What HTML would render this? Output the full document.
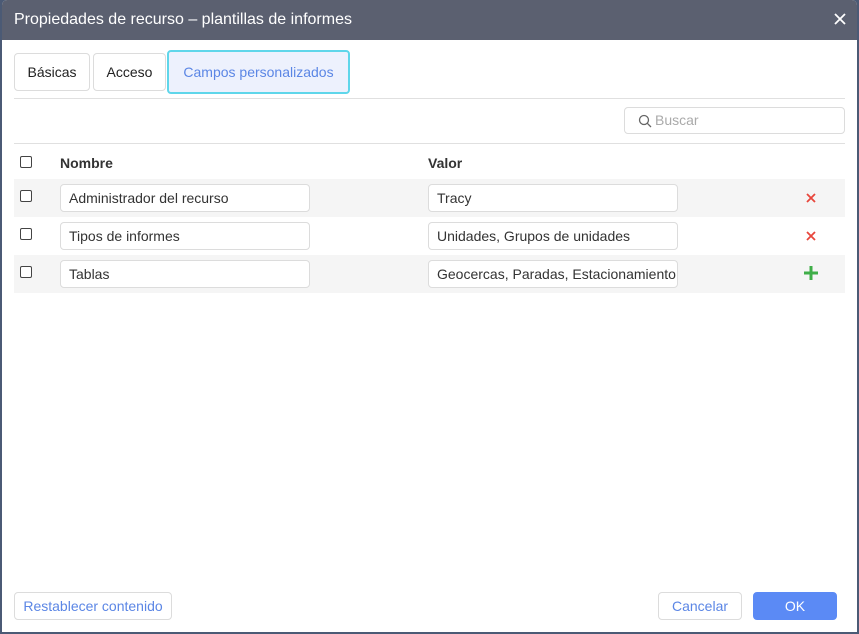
<!DOCTYPE html>
<html><head><style>
*{box-sizing:border-box;margin:0;padding:0}
body{width:859px;height:634px;background:#4b5a75;font-family:"Liberation Sans",Arial,sans-serif;overflow:hidden;position:relative}
.dlg{position:absolute;left:2px;top:0;width:855px;height:632px;background:#fff;border-radius:5px 5px 0 0;overflow:hidden}
.title{height:40px;background:#5b6070;color:#fff;font-size:16px;line-height:40px;padding-left:12px}
.close{position:absolute;right:10px;top:12px}
.tab{position:absolute;top:53px;height:38px;border:1px solid #dcdcdc;border-radius:4px;font-size:14px;line-height:36px;text-align:center;color:#222}
.abs{position:absolute}
.line{position:absolute;left:12px;width:831px;height:1px;background:#e0e0e0}
.row{position:absolute;left:12px;width:831px;height:38px}
.cb{position:absolute;left:6px;width:12px;height:12px;border:1px solid #444;border-radius:2px;background:#fff}
.inp{position:absolute;height:28px;border:1px solid #dcdcdc;border-radius:4px;background:#fff;font-size:14px;line-height:26px;padding-left:8px;color:#333;overflow:hidden;white-space:nowrap;width:250px}
.btn{position:absolute;top:592px;height:28px;border:1px solid #dcdcdc;border-radius:4px;font-size:14px;line-height:26px;text-align:center;color:#5b86e5;background:#fff}
</style></head><body>
<div class="dlg">
<div class="title">Propiedades de recurso – plantillas de informes</div>
<svg class="close" width="14" height="14" viewBox="0 0 14 14"><path d="M2 2L12 12M12 2L2 12" stroke="#fff" stroke-width="1.8"/></svg>
<div class="tab" style="left:12px;width:76px">Básicas</div>
<div class="tab" style="left:91px;width:73px">Acceso</div>
<div class="tab" style="left:165px;top:50px;height:44px;width:183px;border:2px solid #5fd6ea;background:#edf1fd;color:#5b86e5;line-height:40px">Campos personalizados</div>
<div class="line" style="top:98px"></div>
<div class="abs" style="left:622px;top:107px;width:221px;height:27px;border:1px solid #dcdcdc;border-radius:4px;font-size:14px;line-height:25px;color:#aaa;padding-left:30px">Buscar
<svg style="position:absolute;left:13px;top:6px" width="14" height="14" viewBox="0 0 14 14"><circle cx="6" cy="6" r="4.5" fill="none" stroke="#666" stroke-width="1.3"/><path d="M9.3 9.3L13 13" stroke="#666" stroke-width="1.3"/></svg></div>
<div class="line" style="top:143px"></div>
<div class="cb" style="left:18px;top:156px"></div>
<div class="abs" style="left:58px;top:155px;font-size:14px;font-weight:bold;color:#333">Nombre</div>
<div class="abs" style="left:426px;top:155px;font-size:14px;font-weight:bold;color:#333">Valor</div>

<div class="row" style="top:179px;background:#f5f5f5"></div>
<div class="cb" style="left:18px;top:190px"></div>
<div class="inp" style="left:58px;top:184px">Administrador del recurso</div>
<div class="inp" style="left:426px;top:184px">Tracy</div>
<svg class="abs" style="left:804px;top:193px" width="10" height="10" viewBox="0 0 10 10"><path d="M1 1L9 9M9 1L1 9" stroke="#e8463c" stroke-width="1.8"/></svg>

<div class="cb" style="left:18px;top:228px"></div>
<div class="inp" style="left:58px;top:222px">Tipos de informes</div>
<div class="inp" style="left:426px;top:222px">Unidades, Grupos de unidades</div>
<svg class="abs" style="left:804px;top:231px" width="10" height="10" viewBox="0 0 10 10"><path d="M1 1L9 9M9 1L1 9" stroke="#e8463c" stroke-width="1.8"/></svg>

<div class="row" style="top:255px;background:#f5f5f5"></div>
<div class="cb" style="left:18px;top:266px"></div>
<div class="inp" style="left:58px;top:260px">Tablas</div>
<div class="inp" style="left:426px;top:260px">Geocercas, Paradas, Estacionamiento</div>
<svg class="abs" style="left:802px;top:266px" width="14" height="14" viewBox="0 0 14 14"><path d="M7 0V14M0 7H14" stroke="#3fae48" stroke-width="3"/></svg>

<div class="btn" style="left:12px;width:158px">Restablecer contenido</div>
<div class="btn" style="left:656px;width:84px">Cancelar</div>
<div class="btn" style="left:751px;width:84px;background:#5b8af5;border-color:#5b8af5;color:#fff">OK</div>
</div>
</body></html>
